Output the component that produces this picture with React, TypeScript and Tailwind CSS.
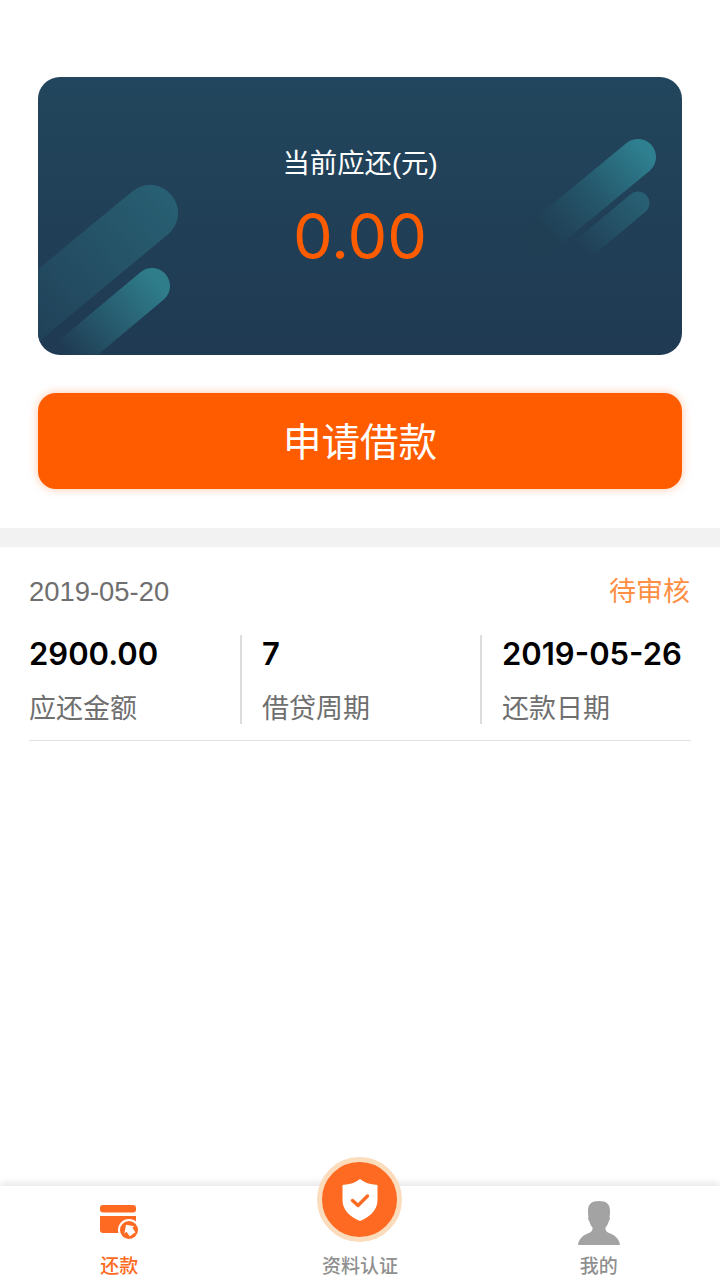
/** Loan home screen: balance card, apply button, latest record and tab bar. */
const font = 'font-["Liberation_Sans","Noto_Sans_CJK_SC",sans-serif]';

function CardStripes() {
  return (
    <svg className="absolute inset-0 w-full h-full" viewBox="0 0 644 278" fill="none">
      <defs>
        <linearGradient id="stripeA" gradientUnits="userSpaceOnUse" x1="125" y1="115" x2="-10" y2="235">
          <stop offset="0" stopColor="#285f72" />
          <stop offset="1" stopColor="#21435a" />
        </linearGradient>
        <linearGradient id="stripeB" gradientUnits="userSpaceOnUse" x1="120" y1="205" x2="30" y2="280">
          <stop offset="0" stopColor="#2f7d8b" />
          <stop offset="1" stopColor="#2f7d8b" stopOpacity="0" />
        </linearGradient>
        <linearGradient id="stripeC" gradientUnits="userSpaceOnUse" x1="605" y1="70" x2="510" y2="155">
          <stop offset="0" stopColor="#2e8090" />
          <stop offset="0.55" stopColor="#25566a" />
          <stop offset="1" stopColor="#203f55" />
        </linearGradient>
        <linearGradient id="stripeD" gradientUnits="userSpaceOnUse" x1="605" y1="125" x2="545" y2="175">
          <stop offset="0" stopColor="#285f72" />
          <stop offset="1" stopColor="#285f72" stopOpacity="0" />
        </linearGradient>
      </defs>
      <line x1="112" y1="136" x2="-50" y2="270" stroke="url(#stripeA)" strokeWidth="56" strokeLinecap="round" />
      <line x1="114" y1="209" x2="10" y2="296" stroke="url(#stripeB)" strokeWidth="36" strokeLinecap="round" />
      <line x1="600" y1="80" x2="503" y2="160" stroke="url(#stripeC)" strokeWidth="36" strokeLinecap="round" />
      <line x1="600" y1="126" x2="545" y2="172" stroke="url(#stripeD)" strokeWidth="23" strokeLinecap="round" />
    </svg>
  );
}

function RepayIcon() {
  return (
    <svg className="w-[40px] h-[36px]" viewBox="0 0 40 36">
      <rect x="0" y="0" width="36" height="7.5" rx="3" fill="#ff6a22" />
      <path d="M0 11h36v12a5 5 0 0 1-5 5H3a3 3 0 0 1-3-3z" fill="#ff6a22" />
      <circle cx="29" cy="25" r="11" fill="#fff" />
      <circle cx="29" cy="25" r="9" fill="#ff6a22" />
      <path d="M23 25.500l6.500-6.500 6 6-2.500 0 0 5.500-7 0 0-5.500z" fill="#fff" transform="rotate(-35 29 25)" />
    </svg>
  );
}

function ShieldIcon() {
  return (
    <svg className="w-[36px] h-[42px]" viewBox="0 0 36 42">
      <path d="M18 0c4 3.500 10 5.500 17.500 6v15c0 9.500-7 16.500-17.500 21C7.500 37.500.500 30.500.500 21V6C8 5.500 14 3.500 18 0z" fill="#fff" />
      <path d="M10.500 21.500l5.500 5 9.500-9.500" fill="none" stroke="#ff6a22" strokeWidth="3.400" strokeLinecap="round" strokeLinejoin="round" />
    </svg>
  );
}

function PersonIcon() {
  return (
    <svg className="w-[42px] h-[44px]" viewBox="0 0 42 44">
      <path
        d="M21 0c7.500 0 11 3 11 10 0 2.500-.2 4.500-.5 6 .8.500.6 3-.7 4-.7 2.800-1.800 5-3.300 6.500-.3 2.500.5 4.500 3.500 5.500 5.500 2 10 5 11 12H0c1-7 5.500-10 11-12 3-1 3.800-3 3.500-5.500-1.500-1.500-2.600-3.700-3.300-6.500-1.300-1-1.500-3.500-.7-4-.3-1.500-.5-3.500-.5-6C10 3 13.500 0 21 0z"
        fill="#a3a3a3"
      />
    </svg>
  );
}

function Stat({ value, label, className }: { value: string; label: string; className: string }) {
  return (
    <div className={`h-[89px] ${className}`}>
      <div className='font-["Inter",sans-serif] font-semibold text-[31px] leading-[37px] text-black whitespace-nowrap'>{value}</div>
      <div className="mt-[20px] text-[27px] leading-[34px] text-[#6f6f6f]">{label}</div>
    </div>
  );
}

export default function App() {
  return (
    <div className={`relative w-[720px] h-[1280px] flex flex-col bg-white overflow-hidden ${font}`}>
      <main className="flex-1">
        <div className="pt-[77px] px-[38px]">
          <div className="relative h-[278px] rounded-[22px] overflow-hidden bg-gradient-to-b from-[#22465d] to-[#1f3a52] flex flex-col items-center">
            <CardStripes />
            <div className="relative mt-[69px] text-[27.400px] leading-[36px] text-white">当前应还(元)</div>
            <div className='relative mt-[19px] font-["Inter",sans-serif] font-normal text-[63px] leading-[70px] text-[#ff5c00]'>0.00</div>
          </div>
          <button className="mt-[38px] w-full h-[96px] pt-[3px] rounded-[18px] bg-[#ff5c00] text-white text-[38.500px] shadow-[0_0_10px_rgba(255,92,0,0.35)]">
            申请借款
          </button>
        </div>

        <div className="mt-[39px] h-[19px] bg-[#f2f2f2]" />

        <section className="px-[29px]">
          <div className="flex items-center justify-between h-[88px] pt-[1px]">
            <span className="text-[27.400px] text-[#6f6f6f]">2019-05-20</span>
            <span className="mr-[1px] mt-[1px] text-[27px] text-[#ff8f45]">待审核</span>
          </div>
          <div className="flex pb-[16px] border-b border-[#e0e0e0]">
            <Stat value="2900.00" label="应还金额" className="w-[211px]" />
            <Stat value="7" label="借贷周期" className="w-[240px] pl-[20px] border-l-2 border-[#dcdcdc]" />
            <Stat value="2019-05-26" label="还款日期" className="flex-1 pl-[20px] border-l-2 border-[#dcdcdc]" />
          </div>
        </section>
      </main>

      <nav className="relative h-[94px] flex bg-white shadow-[0_-3px_8px_rgba(0,0,0,0.1)]">
        <div className="flex-1 flex flex-col items-center pr-[2px]">
          <div className="mt-[19px] h-[50px] pl-[2px]">
            <RepayIcon />
          </div>
          <span className="text-[19px] leading-[24px] font-medium text-[#ff6a22]">还款</span>
        </div>
        <div className="flex-1 flex flex-col items-center justify-end pb-[1px]">
          <span className="text-[19px] leading-[24px] font-medium text-[#8f8f8f]">资料认证</span>
        </div>
        <div className="flex-1 flex flex-col items-center pr-[2px]">
          <div className="mt-[15px] h-[54px]">
            <PersonIcon />
          </div>
          <span className="text-[19px] leading-[24px] font-medium text-[#8f8f8f]">我的</span>
        </div>
        <div className="absolute left-[317px] top-[-29px] w-[85px] h-[85px] rounded-full bg-[#ff6a22] border-[5px] border-[#fbdcbc] flex items-center justify-center">
          <ShieldIcon />
        </div>
      </nav>
    </div>
  );
}
